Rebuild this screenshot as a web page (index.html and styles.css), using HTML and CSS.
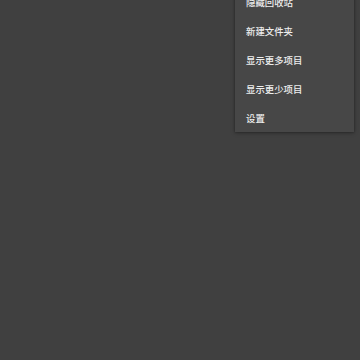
FILE: index.html
```html
<!DOCTYPE html>
<html lang="zh">
<head>
<meta charset="utf-8">
<link rel="stylesheet" href="styles.css">
</head>
<body>
<div class="screen">
  <ul class="menu">
    <li class="item">隐藏回收站</li>
    <li class="item">新建文件夹</li>
    <li class="item">显示更多项目</li>
    <li class="item">显示更少项目</li>
    <li class="item">设置</li>
  </ul>
</div>
</body>
</html>
```
FILE: styles.css
```css
html, body {
  margin: 0;
  padding: 0;
  background: #404040;
}
.screen {
  position: relative;
  width: 360px;
  height: 360px;
  overflow: hidden;
  background: #404040;
  font-family: "Noto Sans CJK SC", "Noto Sans", sans-serif;
}
.menu {
  position: absolute;
  left: 235px;
  top: -13px;
  width: 119px;
  margin: 0;
  padding: 0;
  list-style: none;
  background: #474747;
  box-shadow: 0 1px 4px rgba(0,0,0,0.35), 0 0 2px rgba(0,0,0,0.25);
}
.item {
  box-sizing: border-box;
  height: 29px;
  padding-top: 2px;
  line-height: 27px;
  padding-left: 11px;
  font-size: 9.4px;
  font-weight: 500;
  color: #eeeeee;
  white-space: nowrap;
}
```
